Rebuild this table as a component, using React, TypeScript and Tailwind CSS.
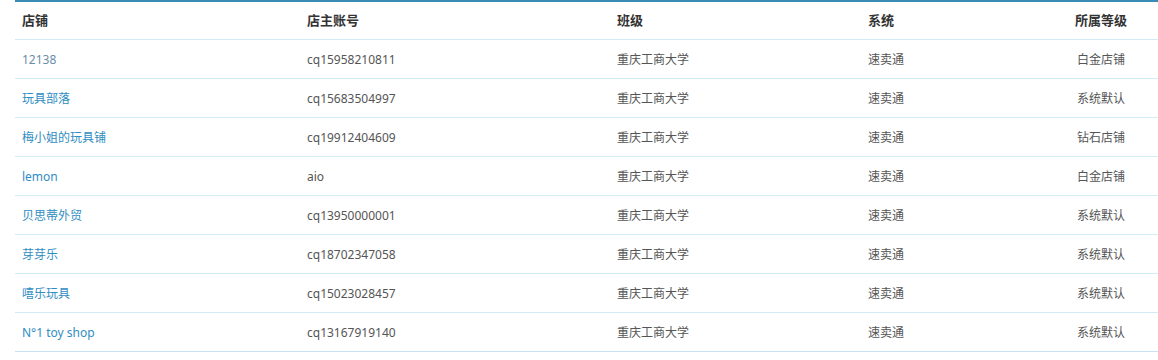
const rows = [
  { shop: "12138", owner: "cq15958210811", cls: "重庆工商大学", sys: "速卖通", level: "白金店铺", muted: true },
  { shop: "玩具部落", owner: "cq15683504997", cls: "重庆工商大学", sys: "速卖通", level: "系统默认" },
  { shop: "梅小姐的玩具铺", owner: "cq19912404609", cls: "重庆工商大学", sys: "速卖通", level: "钻石店铺" },
  { shop: "lemon", owner: "aio", cls: "重庆工商大学", sys: "速卖通", level: "白金店铺" },
  { shop: "贝思蒂外贸", owner: "cq13950000001", cls: "重庆工商大学", sys: "速卖通", level: "系统默认" },
  { shop: "芽芽乐", owner: "cq18702347058", cls: "重庆工商大学", sys: "速卖通", level: "系统默认" },
  { shop: "嘻乐玩具", owner: "cq15023028457", cls: "重庆工商大学", sys: "速卖通", level: "系统默认" },
  { shop: "N°1 toy shop", owner: "cq13167919140", cls: "重庆工商大学", sys: "速卖通", level: "系统默认" },
];

const grid = "grid grid-cols-[292px_310px_251px_1fr_auto] items-center";
// dotted divider drawn as a repeating gradient along the bottom edge
const dots =
  "bg-[linear-gradient(to_right,#a4d8ec_1px,transparent_1px)] bg-[length:2px_1px] bg-bottom bg-repeat-x";

export default function App() {
  return (
    <div
      className="w-[1158px] h-[360px] bg-white pl-[15px]"
      style={{ fontFamily: '"Noto Sans", "Noto Sans CJK SC", sans-serif' }}
    >
      <div className="border-t-2 border-t-[#3a8cb4] border-b border-b-[#c6e2ee]">
        <div className={`${grid} h-[38px] ${dots} text-[13px] font-bold text-[#333]`}>
          <div className="pl-[7px]">店铺</div>
          <div>店主账号</div>
          <div>班级</div>
          <div>系统</div>
          <div className="pr-[31px] text-right">所属等级</div>
        </div>
        {rows.map((r, i) => (
          <div
            key={i}
            className={`${grid} pt-px text-[12px] text-[#555] ${
              i < rows.length - 1 ? `h-[39px] ${dots}` : "h-[38px]"
            }`}
          >
            <div className={`pl-[7px] ${r.muted ? "text-[#6a8ea6]" : "text-[#2f8dc2]"}`}>{r.shop}</div>
            <div>{r.owner}</div>
            <div>{r.cls}</div>
            <div>{r.sys}</div>
            <div className="pr-[33px] text-right">{r.level}</div>
          </div>
        ))}
      </div>
    </div>
  );
}
